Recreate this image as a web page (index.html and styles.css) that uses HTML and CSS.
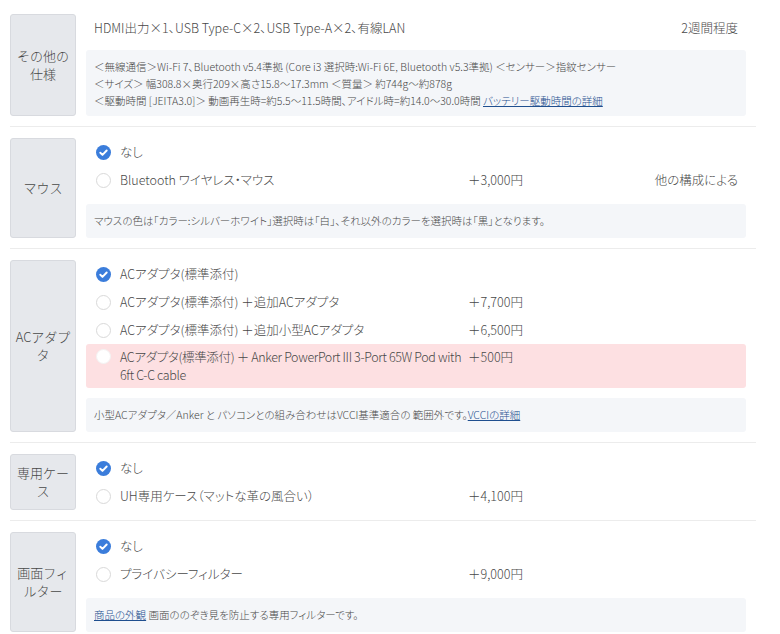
FILE: index.html
```html
<!DOCTYPE html>
<html lang="ja">
<head>
<meta charset="utf-8">
<title>構成選択</title>
<link rel="stylesheet" href="styles.css">
</head>
<body>
<div class="page">

  <section class="sec">
    <div class="label">その他の仕様</div>
    <div class="content">
      <div class="row plain">
        <span class="name">HDMI出力×1、USB Type-C×2、USB Type-A×2、有線LAN</span>
        <span class="price"></span>
        <span class="delivery">2週間程度</span>
      </div>
      <div class="note multi">
        ＜無線通信＞Wi-Fi 7、Bluetooth v5.4準拠 (Core i3 選択時:Wi-Fi 6E, Bluetooth v5.3準拠) ＜センサー＞指紋センサー<br>
        ＜サイズ＞ 幅308.8×奥行209×高さ15.8〜17.3mm ＜質量＞ 約744g〜約878g<br>
        ＜駆動時間 [JEITA3.0]＞ 動画再生時=約5.5〜11.5時間、アイドル時=約14.0〜30.0時間 <a href="#">バッテリー駆動時間の詳細</a>
      </div>
    </div>
  </section>

  <section class="sec">
    <div class="label">マウス</div>
    <div class="content">
      <div class="row">
        <span class="radio on"><svg viewBox="0 0 16 16" width="16" height="16"><circle cx="8" cy="8" r="8" fill="#3b7ddb"/><path d="M4.6 8.3l2.3 2.2 4.5-4.6" stroke="#fff" stroke-width="2.1" fill="none" stroke-linecap="round" stroke-linejoin="round"/></svg></span>
        <span class="name">なし</span>
        <span class="price"></span>
        <span class="delivery"></span>
      </div>
      <div class="row">
        <span class="radio"></span>
        <span class="name">Bluetooth ワイヤレス・マウス</span>
        <span class="price">＋3,000円</span>
        <span class="delivery">他の構成による</span>
      </div>
      <div class="note">マウスの色は「カラー:シルバーホワイト」選択時は「白」、それ以外のカラーを選択時は「黒」となります。</div>
    </div>
  </section>

  <section class="sec">
    <div class="label">ACアダプタ</div>
    <div class="content">
      <div class="row">
        <span class="radio on"><svg viewBox="0 0 16 16" width="16" height="16"><circle cx="8" cy="8" r="8" fill="#3b7ddb"/><path d="M4.6 8.3l2.3 2.2 4.5-4.6" stroke="#fff" stroke-width="2.1" fill="none" stroke-linecap="round" stroke-linejoin="round"/></svg></span>
        <span class="name">ACアダプタ(標準添付)</span>
        <span class="price"></span>
        <span class="delivery"></span>
      </div>
      <div class="row">
        <span class="radio"></span>
        <span class="name">ACアダプタ(標準添付) ＋追加ACアダプタ</span>
        <span class="price">＋7,700円</span>
        <span class="delivery"></span>
      </div>
      <div class="row">
        <span class="radio"></span>
        <span class="name">ACアダプタ(標準添付) ＋追加小型ACアダプタ</span>
        <span class="price">＋6,500円</span>
        <span class="delivery"></span>
      </div>
      <div class="row warn">
        <span class="radio"></span>
        <span class="name tight">ACアダプタ(標準添付) ＋ Anker PowerPort III 3-Port 65W Pod with 6ft C-C cable</span>
        <span class="price">＋500円</span>
        <span class="delivery"></span>
      </div>
      <div class="note">小型ACアダプタ／Anker と パソコンとの組み合わせはVCCI基準適合の 範囲外です。<a href="#">VCCIの詳細</a></div>
    </div>
  </section>

  <section class="sec">
    <div class="label">専用ケース</div>
    <div class="content">
      <div class="row">
        <span class="radio on"><svg viewBox="0 0 16 16" width="16" height="16"><circle cx="8" cy="8" r="8" fill="#3b7ddb"/><path d="M4.6 8.3l2.3 2.2 4.5-4.6" stroke="#fff" stroke-width="2.1" fill="none" stroke-linecap="round" stroke-linejoin="round"/></svg></span>
        <span class="name">なし</span>
        <span class="price"></span>
        <span class="delivery"></span>
      </div>
      <div class="row">
        <span class="radio"></span>
        <span class="name">UH専用ケース（マットな革の風合い）</span>
        <span class="price">＋4,100円</span>
        <span class="delivery"></span>
      </div>
    </div>
  </section>

  <section class="sec">
    <div class="label">画面フィルター</div>
    <div class="content">
      <div class="row">
        <span class="radio on"><svg viewBox="0 0 16 16" width="16" height="16"><circle cx="8" cy="8" r="8" fill="#3b7ddb"/><path d="M4.6 8.3l2.3 2.2 4.5-4.6" stroke="#fff" stroke-width="2.1" fill="none" stroke-linecap="round" stroke-linejoin="round"/></svg></span>
        <span class="name">なし</span>
        <span class="price"></span>
        <span class="delivery"></span>
      </div>
      <div class="row">
        <span class="radio"></span>
        <span class="name">プライバシーフィルター</span>
        <span class="price">＋9,000円</span>
        <span class="delivery"></span>
      </div>
      <div class="note"><a href="#">商品の外観</a> 画面ののぞき見を防止する専用フィルターです。</div>
    </div>
  </section>

</div>
</body>
</html>
```

FILE: styles.css
```css
* { box-sizing: border-box; }

html, body {
  margin: 0;
  padding: 0;
  background: #ffffff;
}

body {
  font-family: "Noto Sans CJK JP", "Noto Sans", sans-serif;
  font-feature-settings: "palt";
  font-weight: 300;
  color: #484848;
  font-size: 12.5px;
}

.page {
  width: 746px;
  margin-left: 10px;
  padding-top: 3px;
}

.sec {
  display: flex;
  gap: 10px;
  padding: 11px 0 10px;
  border-bottom: 1px solid #ececec;
}

.label {
  flex: 0 0 66px;
  display: flex;
  align-items: center;
  justify-content: center;
  text-align: center;
  padding: 0 4px;
  background: #e6e8ec;
  border: 1px solid #d8dadf;
  border-radius: 3px;
  font-size: 13px;
  line-height: 18px;
  color: #484848;
  font-feature-settings: normal;
}

.content {
  flex: 1;
  padding-right: 10px;
  min-width: 0;
}

.row {
  display: flex;
  align-items: center;
  min-height: 28px;
  padding: 0 8px 0 10px;
  line-height: 18px;
}

.row.plain {
  padding-left: 8px;
}

.row.warn {
  align-items: flex-start;
  padding-top: 4px;
  padding-bottom: 4px;
  background: #fde0e2;
  border-radius: 3px;
}

.row.warn .radio {
  margin-top: 1px;
  border-color: #f3f3f3;
}

.radio {
  flex: 0 0 15px;
  width: 15px;
  height: 15px;
  margin-right: 9px;
  border: 1px solid #d9d9d9;
  border-radius: 50%;
  background: #fff;
  display: flex;
}

.radio.on {
  border: none;
  background: none;
}

.radio svg {
  display: block;
  width: 15px;
  height: 15px;
}

.name {
  flex: 0 0 348px;
}

.name.tight {
  letter-spacing: -0.35px;
}

.row.plain .name {
  flex-basis: 374px;
  white-space: nowrap;
}

.price {
  flex: 0 0 110px;
}

.delivery {
  flex: 1;
  text-align: right;
}

.note {
  margin-top: 10px;
  padding: 8px 8px 9px;
  background: #f4f6f9;
  border-radius: 3px;
  font-size: 10.5px;
  line-height: 17px;
  color: #484848;
}

.note.multi {
  margin-top: 8px;
  padding: 8px 8px 7px;
  line-height: 17px;
}

.note a {
  color: #1f4f8f;
  text-decoration: underline;
}
```
